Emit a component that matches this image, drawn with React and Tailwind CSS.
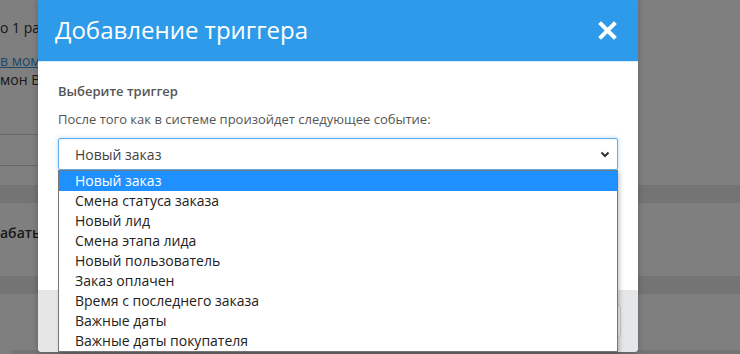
import React from "react";

const items = [
  "Новый заказ",
  "Смена статуса заказа",
  "Новый лид",
  "Смена этапа лида",
  "Новый пользователь",
  "Заказ оплачен",
  "Время с последнего заказа",
  "Важные даты",
  "Важные даты покупателя",
];

export default function App() {
  return (
    <div
      className="relative w-[740px] h-[354px] overflow-hidden bg-white"
      style={{ fontFamily: '"Open Sans", "Noto Sans", sans-serif' }}
    >
      {/* background page */}
      <div className="flex flex-col w-full h-full text-[14px] text-[#333]">
        <div className="h-[18px]" />
        <div className="h-[19px] leading-[19px]">о 1 раз</div>
        <div className="h-[14px]" />
        <div className="h-[19px] leading-[19px] text-[#3b8fd6] underline">в момент</div>
        <div className="h-[19px] leading-[19px]">мон Вы</div>
        <div className="h-[45px]" />
        <div className="h-px w-[320px] bg-[#cccccc]" />
        <div className="h-[30px]" />
        <div className="h-px w-[320px] bg-[#cccccc]" />
        <div className="h-[19px]" />
        <div className="h-[18px] bg-[#e8e8e8]" />
        <div className="h-[20px]" />
        <div className="h-[19px] leading-[19px] font-semibold">абать</div>
        <div className="h-[34px]" />
        <div className="h-[18px] bg-[#e8e8e8]" />
        <div className="flex-1" />
        <div className="h-[4px] ml-[12px] bg-[#e8e8e8]" />
      </div>

      {/* overlay */}
      <div className="absolute inset-0 bg-black/50" />

      {/* modal */}
      <div className="absolute left-[38px] top-0 w-[600px] h-[352px] flex flex-col bg-white rounded-b-[4px] shadow-[0_0_6px_rgba(0,0,0,0.25)]">
        <div className="h-[62px] shrink-0 flex items-center justify-between bg-[#2d9bea] border-b border-[#d6eaf8] pl-[17px] pr-[21px]">
          <span className="text-white text-[24px] leading-none -mt-[1px]">Добавление триггера</span>
          <svg width="19" height="19" viewBox="0 0 19 19" className="-mt-[1px]">
            <path d="M3 3 L16 16 M16 3 L3 16" stroke="white" strokeWidth="4" strokeLinecap="square" />
          </svg>
        </div>

        <div className="flex-1 flex flex-col px-[20px] pt-[20px]">
          <div className="text-[13px] leading-[18px] font-semibold text-[#555]">Выберите триггер</div>
          <div className="mt-[10px] text-[13px] leading-[18px] text-[#555]">
            После того как в системе произойдет следующее событие:
          </div>
          <div className="relative mt-[10px] w-[560px]">
            <div className="h-[32px] flex items-center justify-between border border-[#66afe9] rounded-[2px] pl-[16px] pr-[7px] shadow-[inset_0_1px_1px_rgba(0,0,0,0.06),0_0_4px_rgba(102,175,233,0.5)]">
              <span className="text-[14px] text-[#444]">Новый заказ</span>
              <svg width="10" height="7" viewBox="0 0 10 7">
                <path d="M1.5 1.5 L5 5 L8.5 1.5" stroke="#333" strokeWidth="2" fill="none" />
              </svg>
            </div>
            <div className="absolute left-0 top-[32px] w-[560px] z-10 bg-white border border-[#767676] shadow-[2px_2px_4px_rgba(0,0,0,0.2)]">
              {items.map((t, i) => (
                <div
                  key={t}
                  className={
                    i === 0
                      ? "h-[20px] leading-[20px] pl-[16px] text-[14px] bg-[#1e90ff] text-white"
                      : "h-[20px] leading-[20px] pl-[16px] text-[14px] text-[#222]"
                  }
                >
                  {t}
                </div>
              ))}
            </div>
          </div>
        </div>

        <div className="h-[62px] shrink-0 flex items-center justify-end bg-[#e5e6e8] rounded-b-[4px] pr-[17px]">
          <button className="h-[32px] px-[16px] border border-[#c8c8c8] rounded-[3px] bg-[#f4f4f4] text-[14px] text-[#333]">
            Отмена
          </button>
        </div>
      </div>
    </div>
  );
}
